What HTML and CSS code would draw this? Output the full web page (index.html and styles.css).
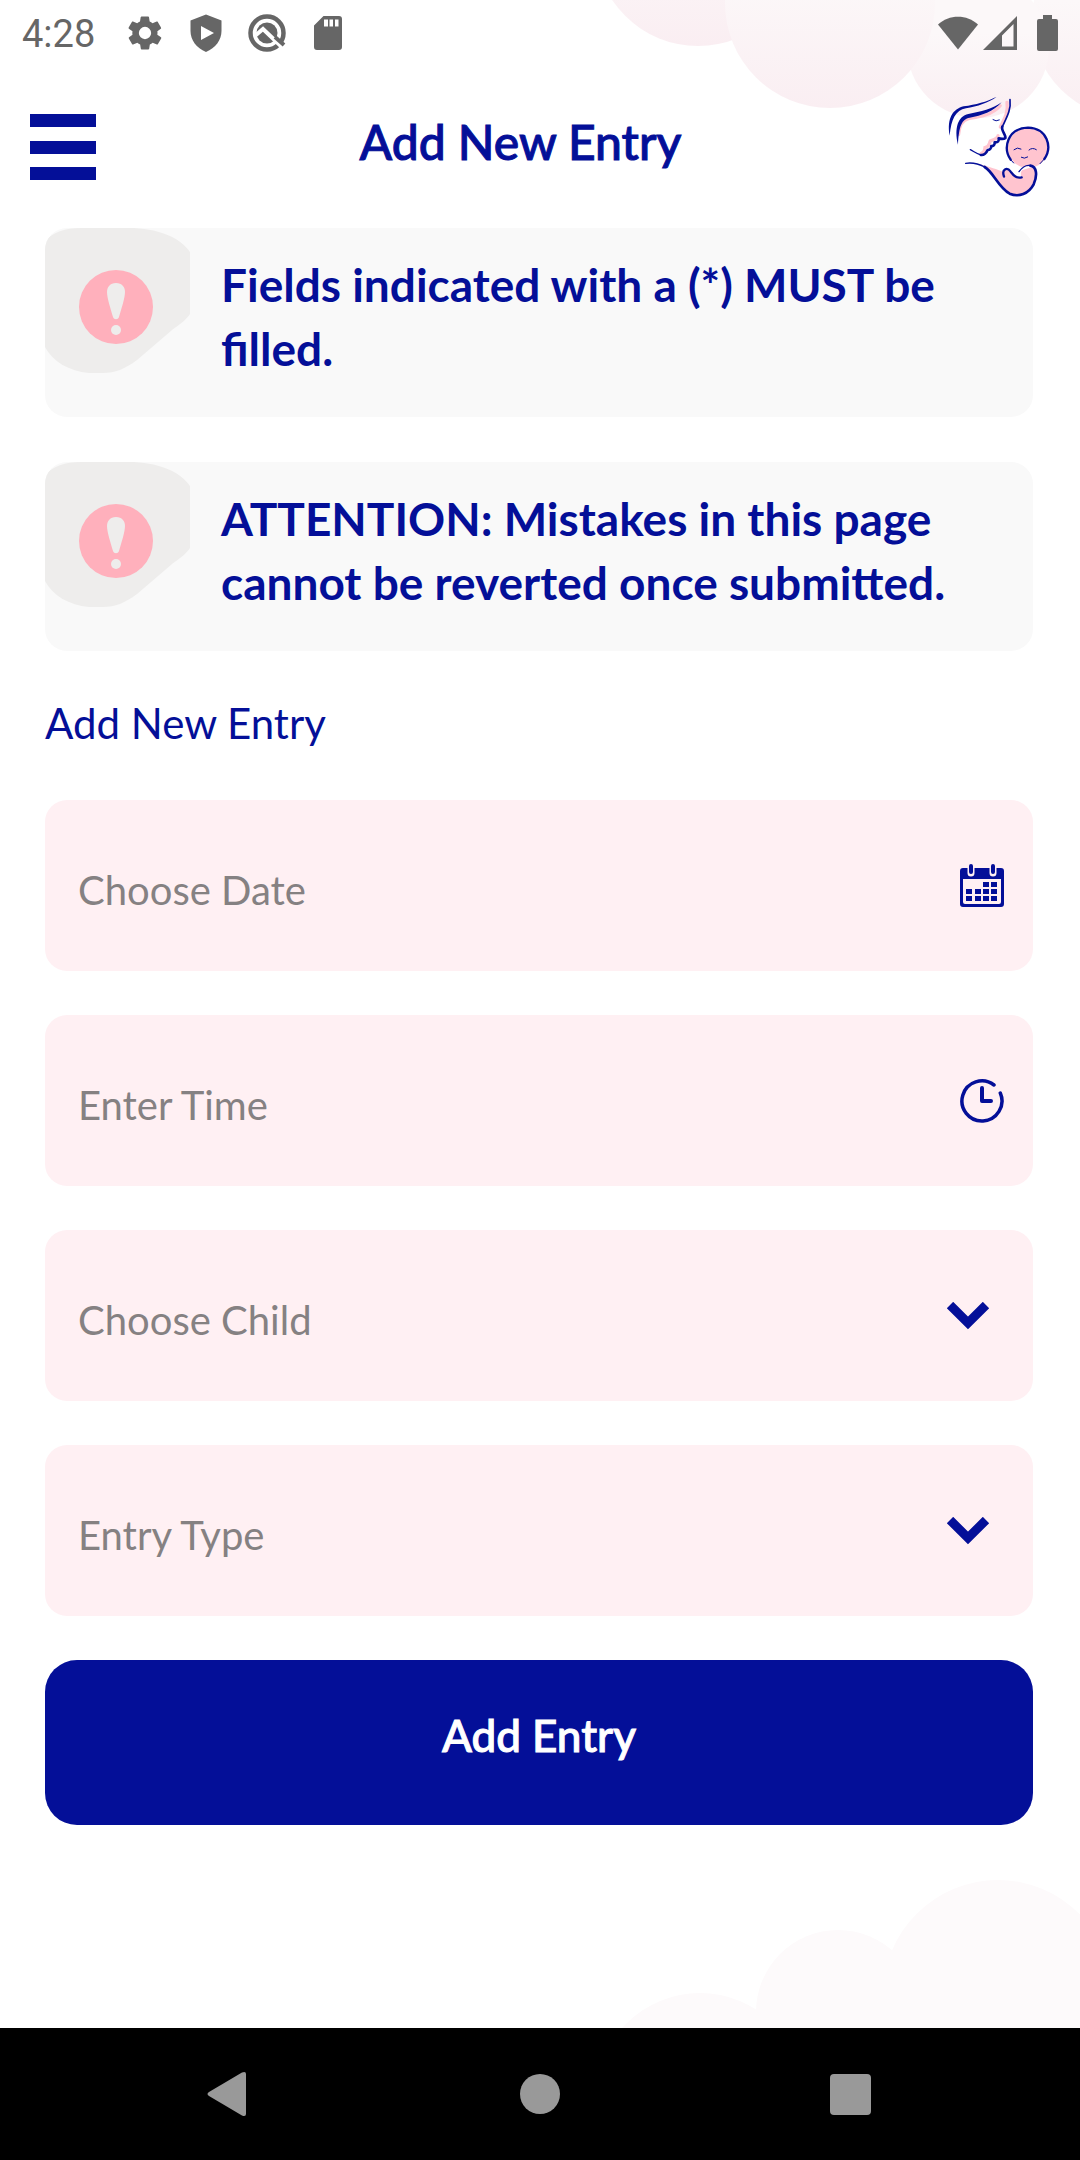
FILE: index.html
```html
<!DOCTYPE html>
<html lang="en">
<head>
<meta charset="utf-8">
<meta name="viewport" content="width=device-width, initial-scale=1">
<title>Add New Entry</title>
<link rel="stylesheet" href="styles.css">
</head>
<body>
<div class="screen">
  <svg class="clouds clouds-top" width="480" height="130" viewBox="600 0 480 130" aria-hidden="true">
    <defs>
      <linearGradient id="puff" x1="0" y1="0" x2="0" y2="1">
        <stop offset="0.4" stop-color="#fcf8f9"/>
        <stop offset="1" stop-color="#faeef2"/>
      </linearGradient>
    </defs>
    <g fill="url(#puff)">
      <circle cx="698" cy="-57" r="103"/>
      <circle cx="1130" cy="20" r="98"/>
      <circle cx="978" cy="47" r="71"/>
      <circle cx="830" cy="3" r="105"/>
    </g>
  </svg>

  <div class="status-bar">
    <span class="clock">4:28</span>
    <div class="status-icons">
      <svg width="40" height="40" viewBox="0 0 24 24"><path d="M19.4 13c0-.3.1-.6.1-1s0-.7-.1-1l2.100-1.600c.2-.2.3-.4.1-.7l-2-3.400c-.1-.2-.4-.3-.6-.2l-2.500 1c-.5-.4-1.100-.7-1.700-1l-.4-2.600c0-.2-.2-.4-.5-.4h-4c-.2 0-.4.200-.5.4l-.4 2.600c-.6.300-1.200.6-1.700 1l-2.500-1c-.2-.1-.5 0-.6.2l-2 3.400c-.1.200-.1.500.1.700L4.500 11c0 .3-.1.700-.1 1s0 .7.100 1l-2.100 1.600c-.2.200-.2.400-.1.700l2 3.400c.1.200.4.300.6.200l2.500-1c.5.400 1.100.7 1.700 1l.4 2.600c0 .200.200.400.5.400h4c.2 0 .5-.2.500-.4l.4-2.600c.6-.3 1.200-.6 1.700-1l2.500 1c.2.100.5 0 .6-.2l2-3.400c.1-.2.100-.5-.1-.7zM12 15.700a3.700 3.700 0 1 1 0-7.400 3.700 3.700 0 0 1 0 7.400z"/></svg>
      <svg width="40" height="40" viewBox="0 0 40 40"><path fill-rule="evenodd" d="M20 1.500 35.500 7.500V18c0 9-6 17-15.500 21C10.500 35 4.500 27 4.500 18V7.500zM15 13v14l13-7z"/></svg>
      <svg width="40" height="40" viewBox="0 0 40 40"><circle cx="20" cy="20" r="16.500" fill="none" stroke="#666" stroke-width="4.500"/><circle cx="20" cy="20" r="10.500"/><path d="M9 22l7-6 22 21" fill="none" stroke="#fff" stroke-width="4"/><path d="M28 24l9 8" stroke="#666" stroke-width="4"/></svg>
      <svg width="40" height="40" viewBox="0 0 40 40"><path fill-rule="evenodd" d="M15.500 3H31a3 3 0 0 1 3 3v28a3 3 0 0 1-3 3H9a3 3 0 0 1-3-3V12.500zM16 6.500v7h4v-7zM21.500 6.500v7h3.500v-7zM27 6.500v7h3.500v-7z"/></svg>
    </div>
    <div class="status-signal">
      <svg width="42" height="34" viewBox="0 0 42 34"><path d="M1 8.500C12-2 30-2 41 8.500L21 33.500z"/></svg>
      <svg width="34" height="34" viewBox="0 0 34 34"><path fill-rule="evenodd" d="M34 0v34H0zM30.500 8L19 19.500V30.500h11.500z"/></svg>
      <svg class="battery" width="21" height="36" viewBox="0 0 21 36"><path d="M6 0h9v4h4a2 2 0 0 1 2 2v28a2 2 0 0 1-2 2H2a2 2 0 0 1-2-2V6a2 2 0 0 1 2-2h4z"/></svg>
    </div>
  </div>

  <header class="app-bar">
    <button class="menu" type="button" aria-label="Menu">
      <span></span><span></span><span></span>
    </button>
    <h1>Add New Entry</h1>
    <svg class="logo" width="108" height="108" viewBox="45 40 324 324" role="img" aria-label="Mother and baby">
      <g fill="none" stroke="#ffc4cf" stroke-linecap="round" stroke-width="9">
        <path d="M86 165C88 142 94 121 116 117C146 112 184 108 211 78"/>
        <path d="M231 68C236 98 222 120 211 142M204 168C204 176 190 180 181 184C177 192 179 201 165 204C164 213 161 219 154 221" stroke-width="10"/>
      </g>
      <circle cx="294" cy="205" r="60" fill="#ffc4cf"/>
      <path fill="#ffc4cf" d="M150 254C180 262 202 270 218 276C222 262 236 268 248 284C258 296 264 294 274 291C267 274 286 254 306 259C326 276 317 302 303 322C287 344 260 352 236 340C202 322 192 280 150 254z"/>
      <path d="M261 283L270 262L318 258L276 272z" fill="#fff"/>
      <g fill="#040f98">
        <path d="M200 51C176 69 142 80 108 86C76 92 64 118 59 168C50 115 69 88 101 80C138 74 169 67 200 51z"/>
        <path d="M215 68C190 96 155 108 119 114C95 119 87 139 84 195C72 145 84 109 115 103C152 96 188 88 215 68z"/>
      </g>
      <g fill="none" stroke="#040f98" stroke-linecap="round" stroke-linejoin="round">
        <path stroke-width="5" d="M240 60C244 91 229 115 217 141"/>
        <path stroke-width="8" d="M217 141C212 152 229 166 226 175C222 179 211 178 206 176C208 184 204 189 194 188C195 195 191 200 184 199C184 207 178 211 173 211C169 220 165 227 153 226"/>
        <path stroke-width="4" d="M153 226C140 222 131 215 121 210"/>
        <path stroke-width="3" d="M189 120Q198 127 208 121"/>
        <path stroke-width="7" d="M242 240C218 205 232 146 294 144C352 146 368 202 343 238"/>
        <path stroke-width="3" d="M242 240L251 250M343 238L330 252M252 210Q262 201 273 208M297 211Q307 202 319 210M274 233Q283 239 293 232"/>
        <path stroke-width="4" d="M107 251C128 248 149 254 164 262"/>
        <path stroke-width="8" d="M164 262C190 277 205 323 239 342C267 354 296 342 311 314C323 286 320 261 301 258"/>
        <path stroke-width="4" d="M301 258C286 254 276 264 267 276"/>
        <path stroke-width="7" d="M222 291C214 268 231 261 242 276C252 289 259 296 275 293"/>
      </g>
    </svg>
  </header>

  <main class="content">
    <div class="notice" role="note">
      <svg class="notice-icon" width="145" height="145" viewBox="0 0 145 145" aria-hidden="true">
        <path fill="#eeedec" d="M0 13C8 4 20 0 36 0H84C112 0 135 9 145 24V86C141 92 134 97 127 102L92 132C80 141 70 145 58 145H44C24 143 8 134 0 119z"/>
        <circle cx="71" cy="79" r="37" fill="#ffb0bc"/>
        <path fill="#eeedec" d="M71 55C77 55 80 59 80 64C80 70 76 82 74 89C73 92 69 92 68 89C66 82 62 70 62 64C62 59 65 55 71 55z"/>
        <circle cx="71" cy="102" r="5" fill="#eeedec"/>
      </svg>
      <p>Fields indicated with a (*) MUST be filled.</p>
    </div>
    <div class="notice" role="note">
      <svg class="notice-icon" width="145" height="145" viewBox="0 0 145 145" aria-hidden="true">
        <path fill="#eeedec" d="M0 13C8 4 20 0 36 0H84C112 0 135 9 145 24V86C141 92 134 97 127 102L92 132C80 141 70 145 58 145H44C24 143 8 134 0 119z"/>
        <circle cx="71" cy="79" r="37" fill="#ffb0bc"/>
        <path fill="#eeedec" d="M71 55C77 55 80 59 80 64C80 70 76 82 74 89C73 92 69 92 68 89C66 82 62 70 62 64C62 59 65 55 71 55z"/>
        <circle cx="71" cy="102" r="5" fill="#eeedec"/>
      </svg>
      <p>ATTENTION: Mistakes in this page cannot be reverted once submitted.</p>
    </div>

    <h2>Add New Entry</h2>

    <form class="entry-form">
      <div class="field">
        <input type="text" aria-label="Choose Date" placeholder="Choose Date">
        <svg width="44" height="44" viewBox="0 0 44 44" aria-hidden="true">
          <path fill="#040f98" fill-rule="evenodd" d="M3 4H41a3 3 0 0 1 3 3V40a3 3 0 0 1-3 3H3a3 3 0 0 1-3-3V7a3 3 0 0 1 3-3zM3 15V38a2 2 0 0 0 2 2H39a2 2 0 0 0 2-2V15z"/>
          <path d="M11 3V9M33 3V9" stroke="#fff0f3" stroke-width="7" stroke-linecap="round"/>
          <path d="M11 2V8M33 2V8" stroke="#040f98" stroke-width="4" stroke-linecap="round"/>
          <path fill="#040f98" d="M23 18h6v5h-6zM31 18h6v5h-6zM6 25h6v5H6zM15 25h6v5h-6zM23 25h6v5h-6zM31 25h6v5h-6zM6 32h6v5H6zM15 32h6v5h-6zM23 32h6v5h-6zM31 32h6v5h-6z"/>
        </svg>
      </div>
      <div class="field">
        <input type="text" aria-label="Enter Time" placeholder="Enter Time">
        <svg width="44" height="44" viewBox="0 0 44 44" aria-hidden="true">
          <g fill="none" stroke="#040f98" stroke-linecap="round" stroke-linejoin="round">
            <path stroke-width="3.500" d="M34 6A20 20 0 1 0 40.300 14"/>
            <path stroke-width="4" d="M22 9V22H31"/>
          </g>
        </svg>
      </div>
      <div class="field field-select">
        <select aria-label="Choose Child"><option>Choose Child</option></select>
        <svg width="44" height="28" viewBox="0 0 44 28" aria-hidden="true"><path fill="none" stroke="#040f98" stroke-width="9" d="M4 3L22 21L40 3"/></svg>
      </div>
      <div class="field field-select">
        <select aria-label="Entry Type"><option>Entry Type</option></select>
        <svg width="44" height="28" viewBox="0 0 44 28" aria-hidden="true"><path fill="none" stroke="#040f98" stroke-width="9" d="M4 3L22 21L40 3"/></svg>
      </div>
      <button class="submit" type="submit">Add Entry</button>
    </form>
  </main>

  <svg class="clouds clouds-bottom" width="480" height="150" viewBox="600 1878 480 150" aria-hidden="true">
    <g fill="#fdfafb">
      <circle cx="700" cy="2097" r="104"/>
      <circle cx="838" cy="2012" r="82"/>
      <circle cx="998" cy="1995" r="115"/>
    </g>
  </svg>
</div>

<nav class="system-nav">
  <button type="button" aria-label="Back"><svg width="44" height="46" viewBox="0 0 44 46"><path d="M2 21L35 1.500Q39 0 39 3V43Q39 46 35 44.500L2 25Q-1 23 2 21z"/></svg></button>
  <button type="button" aria-label="Home"><svg width="44" height="46" viewBox="0 0 44 46"><circle cx="22" cy="23" r="20"/></svg></button>
  <button type="button" aria-label="Recent apps"><svg width="44" height="46" viewBox="0 0 44 46"><rect x="1" y="3" width="41" height="41" rx="4"/></svg></button>
</nav>
</body>
</html>
```
FILE: styles.css
```css
* {
  box-sizing: border-box;
}

body {
  --navy: #040f98;
  --blush: #fff0f3;
  margin: 0;
  min-height: 100vh;
  display: flex;
  flex-direction: column;
  background: #fff;
  color: var(--navy);
  font-family: Lato, "Open Sans", sans-serif;
}

button,
input,
select {
  margin: 0;
  padding: 0;
  border: 0;
  background: none;
  color: inherit;
  font: inherit;
}

svg {
  display: block;
  flex: none;
}

.screen {
  position: relative;
  z-index: 0;
  flex: 1;
  overflow: hidden;
}

.clouds {
  position: absolute;
  right: 0;
  z-index: -1;
}

.clouds-top {
  top: 0;
}

.clouds-bottom {
  bottom: 0;
}

.status-bar {
  display: flex;
  align-items: center;
  height: 66px;
  padding: 0 22px;
  color: #666;
  fill: #666;
  font: 38px/48px Roboto, sans-serif;
}

.clock {
  padding-top: 2px;
}

.status-icons {
  display: flex;
  gap: 21px;
  margin-left: 30px;
}

.status-signal {
  display: flex;
  align-items: center;
  gap: 4px;
  margin-left: auto;
}

.battery {
  margin-left: 16px;
}

.app-bar {
  display: flex;
  align-items: center;
  justify-content: space-between;
  height: 162px;
  padding: 0 27px 0 30px;
}

.menu {
  display: flex;
  flex-direction: column;
  justify-content: space-between;
  width: 66px;
  height: 66px;
}

.menu span {
  width: 100%;
  height: 13px;
  background: var(--navy);
}

h1 {
  margin: 0;
  padding-bottom: 10px;
  font-size: 48px;
  font-weight: 500;
  line-height: 60px;
  -webkit-text-stroke: 1px currentColor;
}

.content {
  padding: 0 47px 44px 45px;
}

.notice {
  display: flex;
  align-items: flex-start;
  gap: 31px;
  margin-bottom: 45px;
  border-radius: 22px;
  background: #f9f9f9;
  overflow: hidden;
}

.notice p {
  margin: 0;
  padding: 25px 40px 36px 0;
  font-size: 46px;
  font-weight: 700;
  line-height: 64px;
}

h2 {
  margin: 0 0 50px;
  font-size: 42px;
  font-weight: 400;
  line-height: 54px;
}

.entry-form {
  display: flex;
  flex-direction: column;
  gap: 44px;
}

.field {
  display: grid;
  grid-template-columns: 1fr;
  align-items: center;
  height: 171px;
  border-radius: 22px;
  background: var(--blush);
}

.field > * {
  grid-area: 1 / 1;
}

.field input,
.field select {
  width: 100%;
  height: 100%;
  padding: 8px 100px 0 33px;
  border-radius: 22px;
  color: #858182;
  font-size: 40px;
  appearance: none;
}

.field input::placeholder {
  color: #858182;
  opacity: 1;
}

.field svg {
  justify-self: end;
  margin-right: 29px;
  pointer-events: none;
}

.field-select svg {
  margin-right: 43px;
}

.submit {
  height: 165px;
  padding-bottom: 16px;
  border-radius: 32px;
  background: var(--navy);
  color: #fff;
  font-size: 44px;
  font-weight: 500;
  -webkit-text-stroke: 1px currentColor;
}

.system-nav {
  display: flex;
  justify-content: center;
  gap: 267px;
  padding: 43px 0;
  background: #000;
  fill: #999;
}
```
